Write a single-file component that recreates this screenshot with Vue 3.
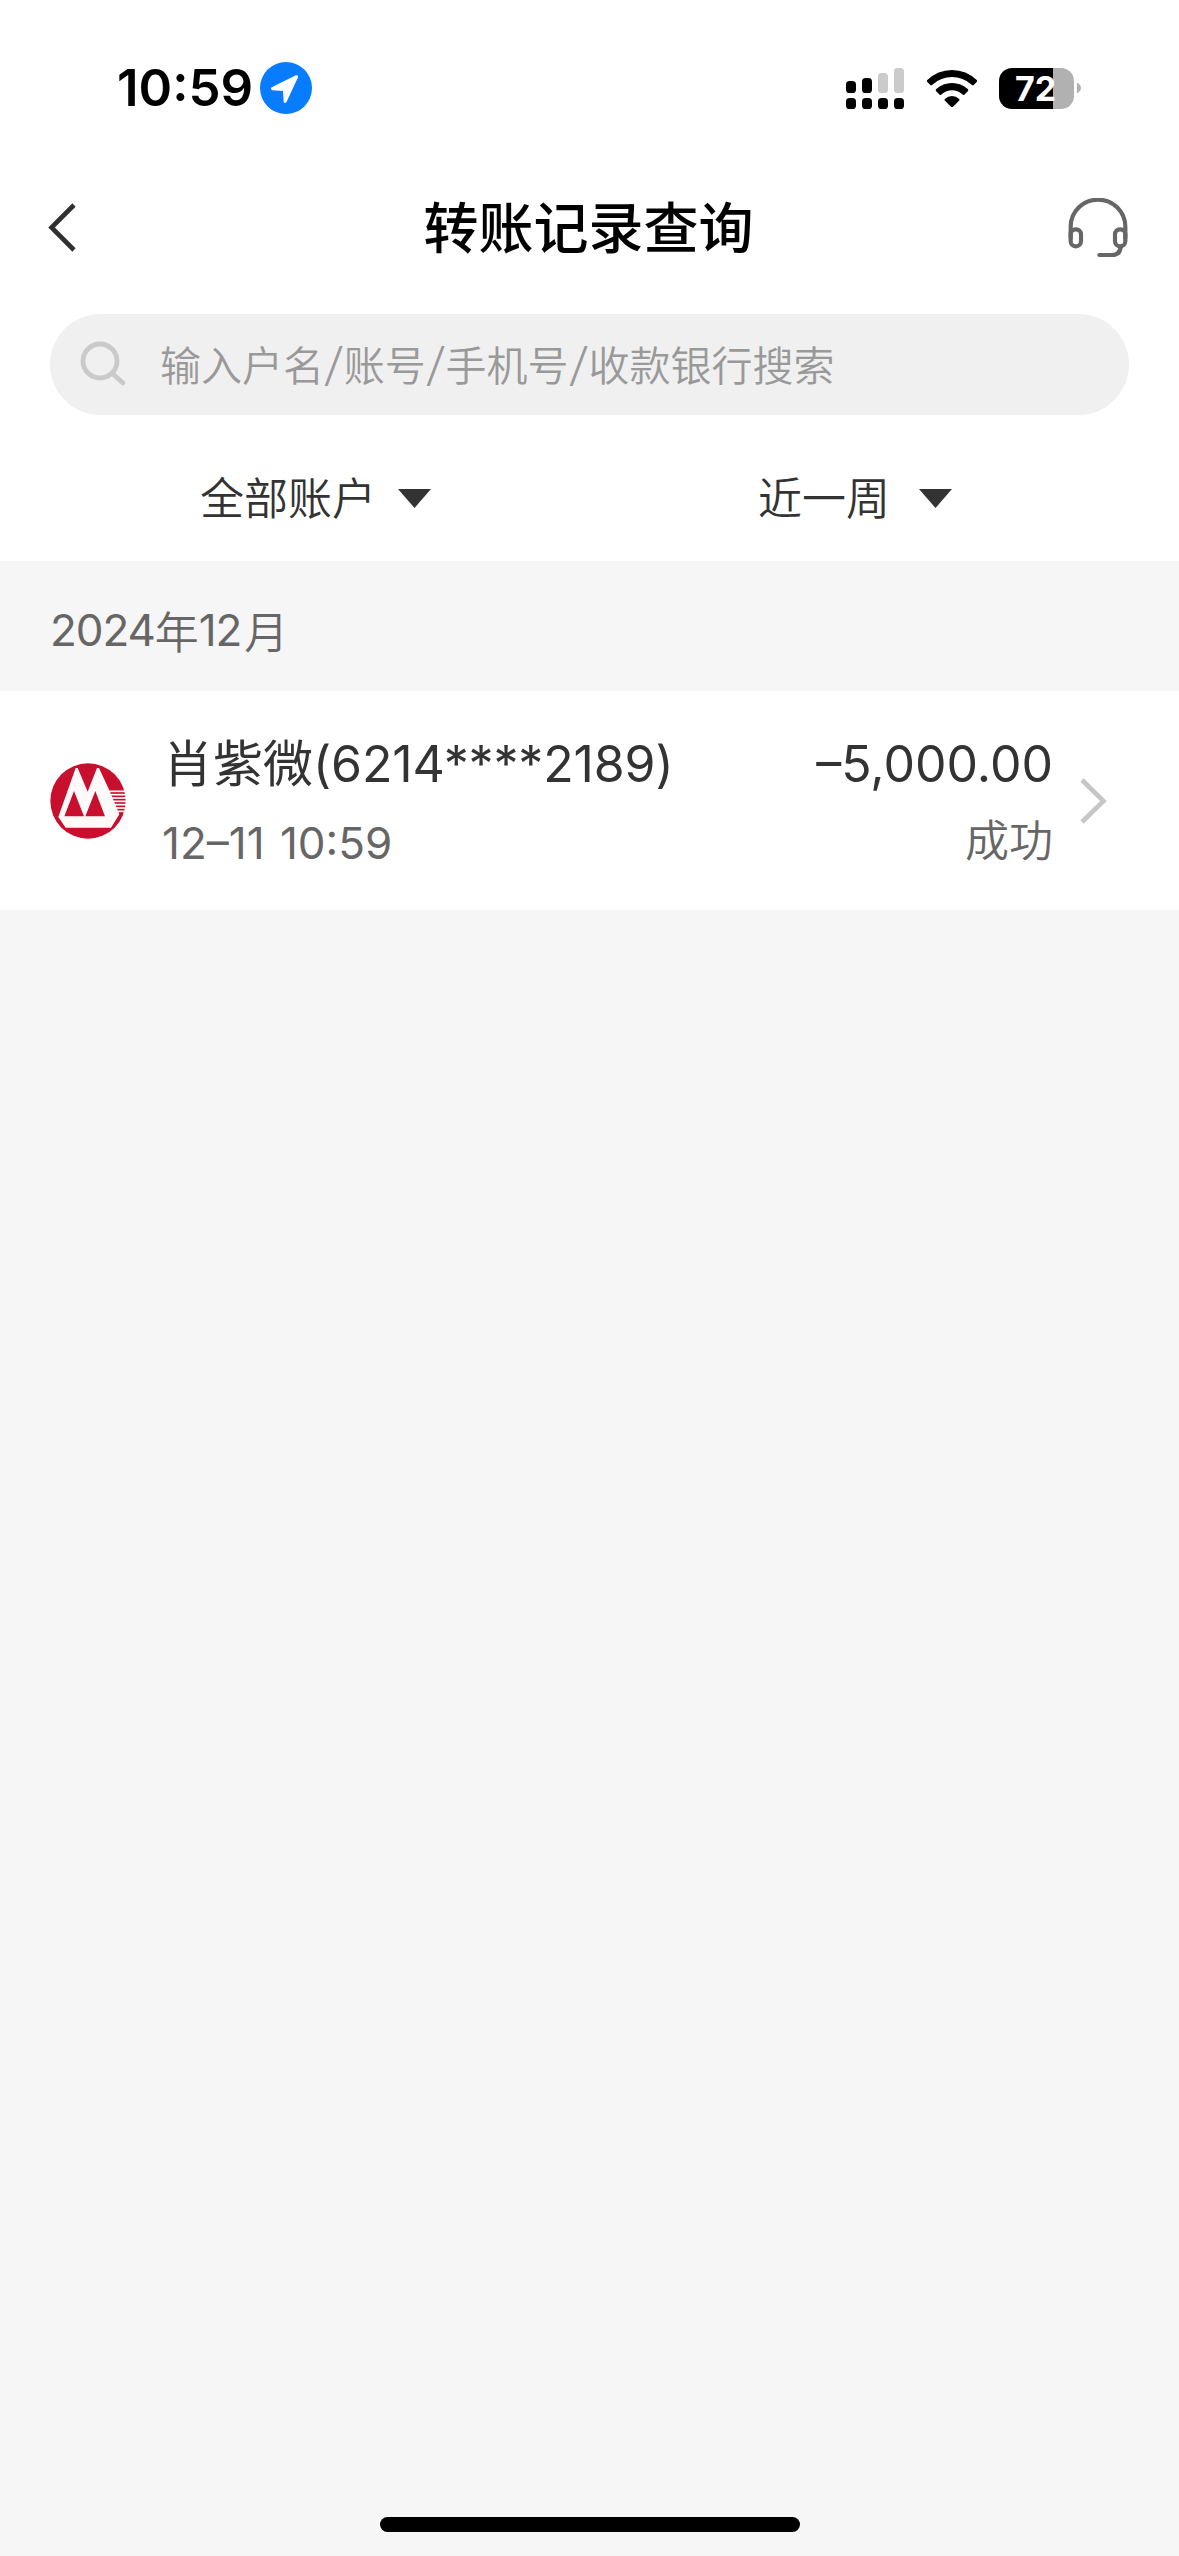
<script setup>
const filters = [
  { label: '全部账户', key: 'account' },
  { label: '近一周', key: 'range' },
]
const records = [
  {
    name: '肖紫微',
    card: '(6214****2189)',
    time: '12–11 10:59',
    amount: '–5,000.00',
    status: '成功',
  },
]
const placeholder = ['输入户名', '账号', '手机号', '收款银行搜索']
const stripes = [213, 223, 233, 243, 253, 263, 273]
</script>

<template>
  <div class="screen">
    <header class="status">
      <span class="clock">10:59</span>
      <svg class="location" width="52" height="52" viewBox="0 0 156 156">
        <circle cx="78" cy="78" r="78" fill="#087cfe" />
        <path d="M108 40 L35 76 Q30 82 37 85 L69 87 L71 120 Q75 126 80 119 L114 46 Q116 38 108 40Z" fill="#fff" />
      </svg>
      <span class="gap"></span>
      <svg class="signal" width="58" height="41" viewBox="0 0 58 41">
        <g fill="#000">
          <rect x="0" y="13" width="10" height="12" rx="3.6" />
          <rect x="16" y="10" width="10" height="15" rx="3.6" />
          <rect x="0" y="30" width="10" height="11" rx="3.6" />
          <rect x="16" y="30" width="10" height="11" rx="3.6" />
          <rect x="32" y="30" width="10" height="11" rx="3.6" />
          <rect x="48" y="30" width="10" height="11" rx="3.6" />
        </g>
        <g fill="#cbcbcb">
          <rect x="32" y="5" width="10" height="20" rx="3.6" />
          <rect x="48" y="0" width="10" height="25" rx="3.6" />
        </g>
      </svg>
      <svg class="wifi" width="50" height="37" viewBox="0 0 150 111">
        <path d="M0 31 Q32 0 75 0 Q118 0 150 31 Q151 34 149 36 L140 45 Q137 47 134 44 Q108 21 75 21 Q42 21 16 44 Q13 47 10 45 L1 36 Q-1 34 0 31Z" />
        <path d="M27 58 Q48 39 75 39 Q102 39 123 58 Q125 61 123 63 L112 74 Q109 76 106 73 Q92 61 75 61 Q58 61 44 73 Q41 76 38 74 L27 63 Q25 61 27 58Z" />
        <path d="M54 86 Q63 78 75 78 Q87 78 96 86 Q99 89 96 92 L78 110 Q75 112 72 110 L54 92 Q51 89 54 86Z" />
      </svg>
      <div class="battery"><span>72</span></div>
      <svg class="nub" width="4" height="14" viewBox="0 0 5 14"><path d="M0 0 Q5 3 5 7 Q5 11 0 14Z" fill="#b1b1b1" /></svg>
    </header>

    <nav class="nav">
      <svg class="back" width="30" height="52" viewBox="0 0 30 52">
        <path d="M26 3 L3.500 25.500 L26 48" fill="none" stroke="#303030" stroke-width="4.600" />
      </svg>
      <h1>转账记录查询</h1>
      <svg class="headset" width="60" height="60" viewBox="0 0 180 180" fill="none" stroke="#666" stroke-width="12.500" stroke-linecap="round">
        <path d="M8 120 V86 A81 80 0 0 1 172 86 V120" />
        <rect x="8" y="94" width="31" height="51" rx="15" />
        <rect x="141" y="94" width="31" height="51" rx="15" />
        <path d="M158 147 Q156 171 132 171 H94" />
      </svg>
    </nav>

    <div class="search-bar">
      <div class="search">
        <svg width="48" height="48" viewBox="0 0 48 48" fill="none" stroke="#cacaca" stroke-width="4.800" stroke-linecap="round">
          <circle cx="20" cy="20" r="17" />
          <path d="M33 33 L43 42" />
        </svg>
        <p>
          <template v-for="(part, i) in placeholder" :key="part"><span v-if="i" class="slash">/</span>{{ part }}</template>
        </p>
      </div>
    </div>

    <div class="filters">
      <div v-for="f in filters" :key="f.key" class="filter" :class="f.key">
        <span>{{ f.label }}</span>
        <svg width="33" height="19" viewBox="0 0 33 19"><path d="M0 0 H33 L16.500 19Z" fill="#333" /></svg>
      </div>
    </div>

    <div class="month"><span class="digits">2024</span><span>年</span><span class="digits">12</span><span class="unit">月</span></div>

    <article v-for="r in records" :key="r.card" class="record">
      <svg class="logo" width="76" height="76" viewBox="60 128 228 228">
        <circle cx="174" cy="242" r="113" fill="#c8102e" />
        <path d="M137 143 H143 L173 214 L201 143 H207 L238 210 L268 282 L243 322 H107 L85 290Z" fill="#fffafa" />
        <path d="M132 212 L162 288 H103Z M196 212 L225 288 H166Z" fill="#c8102e" />
        <path v-for="(y, i) in stripes" :key="y" :d="`M${238 + i * 4} ${y} H288`" stroke="#fff" stroke-width="5" />
      </svg>
      <div class="who">
        <div class="name"><span>{{ r.name }}</span><span class="card">{{ r.card }}</span></div>
        <div class="time">{{ r.time }}</div>
      </div>
      <div class="sum">
        <div class="amount">{{ r.amount }}</div>
        <div class="state">{{ r.status }}</div>
      </div>
      <svg class="more" width="28" height="48" viewBox="0 0 28 48">
        <path d="M3 3 L24.500 24 L3 45" fill="none" stroke="#c6c6c6" stroke-width="4.600" />
      </svg>
    </article>

    <footer><i class="home"></i></footer>
  </div>
</template>

<style>
body {
  margin: 0;
  background: #f6f6f6;
}
</style>

<style scoped>
.screen {
  width: 1179px;
  height: 2556px;
  display: flex;
  flex-direction: column;
  background: #f6f6f6;
  color: #333;
  font-family: Inter, "Noto Sans CJK SC", sans-serif;
  overflow: hidden;
}
svg {
  display: block;
  flex: none;
}
.status {
  height: 176px;
  box-sizing: border-box;
  padding: 0 98px 0 117px;
  display: flex;
  align-items: center;
  background: #fff;
  color: #000;
}
.clock {
  width: 143px;
  font-size: 51px;
  line-height: 60px;
  font-weight: 600;
  letter-spacing: 0;
  white-space: nowrap;
}
.gap {
  flex: 1;
}
.wifi {
  margin-left: 23px;
}
.battery {
  margin-left: 22px;
  width: 75px;
  height: 41px;
  border-radius: 13px;
  background: linear-gradient(90deg, #000 54px, #b1b1b1 54px);
  color: #fff;
  font-size: 34px;
  font-weight: 700;
  line-height: 42px;
  text-align: center;
}
.battery span {
  margin-right: 2px;
}
.nub {
  margin-left: 3px;
}
.nav {
  height: 138px;
  box-sizing: border-box;
  padding: 0 51px 34px 48px;
  display: flex;
  align-items: center;
  justify-content: space-between;
  background: #fff;
}
h1 {
  margin: 0 0 0 31px;
  font-size: 55px;
  line-height: 80px;
  font-weight: 500;
  color: #000;
}
.search-bar {
  padding: 0 50px;
  background: #fff;
}
.search {
  display: flex;
  align-items: center;
  height: 101px;
  box-sizing: border-box;
  padding-left: 30px;
  background: #f0f0f0;
  border-radius: 51px;
}
.search p {
  margin: 0 0 0 32px;
  font-size: 41px;
  line-height: 60px;
  font-weight: 350;
  color: #999;
  white-space: nowrap;
}
.slash {
  display: inline-block;
  width: 19.800px;
  text-align: center;
  font-size: 46px;
  line-height: 60px;
  font-weight: 300;
  transform: skewX(-6deg);
}
.filters {
  height: 146px;
  display: flex;
  background: #fff;
}
.filter {
  display: flex;
  align-items: center;
  padding-top: 21px;
  box-sizing: border-box;
  font-size: 44px;
  line-height: 64px;
  font-weight: 350;
}
.account {
  width: 557px;
  padding-left: 200px;
  gap: 22px;
}
.range {
  padding-left: 201px;
  gap: 29px;
}
.month {
  height: 130px;
  box-sizing: border-box;
  padding: 8px 50px 0;
  display: flex;
  align-items: center;
  font-size: 44px;
  font-weight: 350;
  color: #666;
}
.digits {
  font-weight: 400;
  letter-spacing: -1.100px;
}
.unit {
  margin-left: 3px;
}
.record {
  height: 219px;
  box-sizing: border-box;
  padding: 0 72px 0 50px;
  display: flex;
  align-items: center;
  background: #fff;
}
.who {
  margin-left: 36px;
  padding-top: 6px;
  flex: 1;
}
.name {
  display: flex;
  margin-left: 1px;
  font-size: 50px;
  line-height: 78px;
}
.card {
  letter-spacing: -0.150px;
}
.time {
  font-size: 44px;
  line-height: 80px;
  word-spacing: 3px;
  color: #666;
}
.sum {
  padding-top: 6px;
  text-align: right;
}
.amount {
  font-size: 50px;
  line-height: 78px;
}
.state {
  font-size: 44px;
  line-height: 76px;
  padding-bottom: 4px;
  font-weight: 350;
  color: #666;
}
.more {
  margin-left: 26px;
}
footer {
  margin-top: auto;
  height: 39px;
  display: flex;
  justify-content: center;
}
.home {
  width: 420px;
  height: 15px;
  border-radius: 8px;
  background: #000;
}
</style>
